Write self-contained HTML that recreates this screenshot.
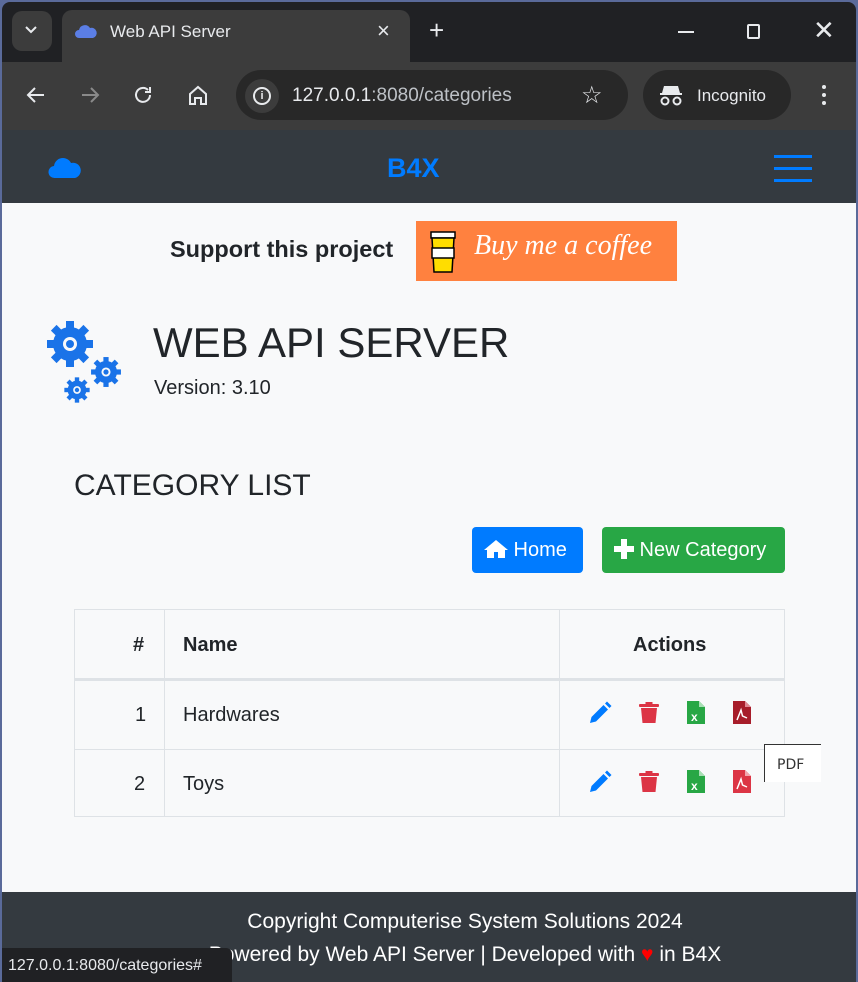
<!DOCTYPE html>
<html><head><meta charset="utf-8"><style>
*{box-sizing:border-box;margin:0;padding:0}
body{width:858px;height:982px;overflow:hidden;background:#5a6a9a;font-family:"Liberation Sans",sans-serif;position:relative}
.abs{position:absolute}
.win{left:2px;top:2px;width:854px;height:980px;background:#202124;border-radius:8px 8px 0 0;overflow:hidden}
.t{color:#e8eaed;font-size:17px}
</style></head><body>
<div class="abs win">
 <div class="abs" style="left:10px;top:9px;width:40px;height:40px;background:#3c3c3c;border-radius:10px"></div>
 <svg class="abs" style="left:22px;top:22px" width="14" height="12"><path d="M2 3l5 5 5-5" stroke="#e8eaed" stroke-width="2" fill="none"/></svg>
 <div class="abs" style="left:60px;top:8px;width:348px;height:60px;background:#3c3c3c;border-radius:10px 10px 0 0"></div>
 <svg class="abs" style="left:72px;top:20px" width="24" height="18"><path d="M5 16a4 4 0 0 1 0-8a6 6 0 0 1 11-2a5 5 0 0 1 3 10z" fill="#5b7ee5"/></svg>
 <div class="abs t" style="left:108px;top:20px">Web API Server</div>
 <div class="abs t" style="left:375px;top:16px;font-size:22px">×</div>
 <div class="abs t" style="left:427px;top:13px;font-size:26px">+</div>
 <div class="abs" style="left:676px;top:29px;width:16px;height:2px;background:#e8eaed"></div>
 <div class="abs" style="left:745px;top:22px;width:13px;height:15px;border:2px solid #e8eaed;border-radius:2px"></div>
 <div class="abs t" style="left:811px;top:13px;font-size:26px">✕</div>
 <div class="abs" style="left:0;top:60px;width:854px;height:68px;background:#3c3c3c"></div>
 <svg class="abs" style="left:22px;top:82px" width="24" height="22" stroke="#e8eaed" stroke-width="2" fill="none"><path d="M20 11H4M11 4l-7 7 7 7"/></svg>
 <svg class="abs" style="left:76px;top:82px" width="24" height="22" stroke="#8a8a8a" stroke-width="2" fill="none"><path d="M4 11h16M13 4l7 7-7 7"/></svg>
 <svg class="abs" style="left:130px;top:82px" width="24" height="22" stroke="#e8eaed" stroke-width="2" fill="none"><path d="M18 11a7 7 0 1 1-2-5M18 3v5h-5"/></svg>
 <svg class="abs" style="left:184px;top:82px" width="24" height="24" stroke="#e8eaed" stroke-width="2" fill="none"><path d="M4 10l8-7 8 7v10h-5v-6h-6v6H4z"/></svg>
 <div class="abs" style="left:234px;top:68px;width:392px;height:50px;background:#282828;border-radius:25px"></div>
 <div class="abs" style="left:243px;top:77px;width:34px;height:34px;background:#3c3c3c;border-radius:50%"></div>
 <div class="abs" style="left:251px;top:85px;width:18px;height:18px;border:2px solid #e8eaed;border-radius:50%;color:#e8eaed;font-size:11px;font-weight:bold;text-align:center;line-height:14px">i</div>
 <div class="abs t" style="left:290px;top:83px;font-size:19px">127.0.0.1<span style="color:#bdc1c6">:8080/categories</span></div>
 <div class="abs t" style="left:579px;top:79px;font-size:24px">☆</div>
 <div class="abs" style="left:641px;top:68px;width:148px;height:50px;background:#282828;border-radius:25px"></div>
 <svg class="abs" style="left:657px;top:82px" width="24" height="22" fill="#e8eaed"><path d="M5 2h14l2 7H3z"/><rect x="1" y="9" width="22" height="2"/><circle cx="6" cy="17" r="3.5" stroke="#e8eaed" stroke-width="2" fill="none"/><circle cx="18" cy="17" r="3.5" stroke="#e8eaed" stroke-width="2" fill="none"/></svg>
 <div class="abs t" style="left:695px;top:84px">Incognito</div>
 <div class="abs" style="left:820px;top:83px;width:4px;height:4px;background:#e8eaed;border-radius:50%;box-shadow:0 8px #e8eaed,0 16px #e8eaed"></div>
 <div class="abs" style="left:0;top:128px;width:854px;height:73px;background:#343a40"></div>
 <svg class="abs" style="left:46px;top:152px" width="34" height="26"><path d="M7 24a6 6 0 0 1-1-12a9 9 0 0 1 17-3a7 7 0 0 1 4 15z" fill="#007bff"/></svg>
 <div class="abs" style="left:385px;top:151px;color:#007bff;font-size:27px;font-weight:bold">B4X</div>
 <div class="abs" style="left:772px;top:153px;width:38px;height:3px;background:#007bff;box-shadow:0 12px #007bff,0 24px #007bff"></div>
 <div class="abs" style="left:0;top:201px;width:854px;height:689px;background:#f8f9fa"></div>
 <div class="abs" style="left:168px;top:234px;font-size:23.5px;font-weight:bold;color:#212529">Support this project</div>
 <div class="abs" style="left:414px;top:219px;width:261px;height:60px;background:#ff813f"></div>
 <svg class="abs" style="left:426px;top:228px" width="30" height="44"><rect x="3" y="2" width="24" height="6" fill="#fff" stroke="#000" stroke-width="1.5"/><path d="M4 8h22l-2 34H6z" fill="#ffdd00" stroke="#000" stroke-width="1.5"/><rect x="4" y="18" width="22" height="10" fill="#fff" stroke="#000" stroke-width="1.5"/></svg>
 <div class="abs" style="left:472px;top:228px;color:#fff;font-size:28px;font-family:'Liberation Serif',serif;font-style:italic">Buy me a coffee</div>
 <svg class="abs" style="left:44px;top:318px" width="80" height="86" fill="#1a73e8">
  <g transform="translate(24,24)"><circle r="17"/><g id="tt"><rect x="-4" y="-23" width="8" height="8"/></g><use href="#tt" transform="rotate(45)"/><use href="#tt" transform="rotate(90)"/><use href="#tt" transform="rotate(135)"/><use href="#tt" transform="rotate(180)"/><use href="#tt" transform="rotate(225)"/><use href="#tt" transform="rotate(270)"/><use href="#tt" transform="rotate(315)"/><circle r="7" fill="#f8f9fa"/><circle r="4"/></g>
  <g transform="translate(60,52) scale(.65)"><circle r="17"/><use href="#tt"/><use href="#tt" transform="rotate(45)"/><use href="#tt" transform="rotate(90)"/><use href="#tt" transform="rotate(135)"/><use href="#tt" transform="rotate(180)"/><use href="#tt" transform="rotate(225)"/><use href="#tt" transform="rotate(270)"/><use href="#tt" transform="rotate(315)"/><circle r="7" fill="#f8f9fa"/><circle r="4"/></g>
  <g transform="translate(31,70) scale(.55)"><circle r="17"/><use href="#tt"/><use href="#tt" transform="rotate(45)"/><use href="#tt" transform="rotate(90)"/><use href="#tt" transform="rotate(135)"/><use href="#tt" transform="rotate(180)"/><use href="#tt" transform="rotate(225)"/><use href="#tt" transform="rotate(270)"/><use href="#tt" transform="rotate(315)"/><circle r="7" fill="#f8f9fa"/><circle r="4"/></g>
 </svg>
 <div class="abs" style="left:151px;top:317px;font-size:42px;color:#212529">WEB API SERVER</div>
 <div class="abs" style="left:152px;top:375px;font-size:20px;color:#212529">Version: 3.10</div>
 <div class="abs" style="left:72px;top:467px;font-size:30px;color:#212529">CATEGORY LIST</div>
 <div class="abs" style="left:470px;top:525px;width:111px;height:46px;background:#007bff;border-radius:4px;color:#fff;font-size:20px;line-height:46px;padding-left:12px">
  <svg width="24" height="20" style="vertical-align:-3px" fill="#fff"><path d="M12 1L0 11h3v8h7v-6h4v6h7v-8h3z"/></svg> Home</div>
 <div class="abs" style="left:600px;top:525px;width:183px;height:46px;background:#28a745;border-radius:4px;color:#fff;font-size:20px;line-height:46px;padding-left:12px">
  <svg width="20" height="20" style="vertical-align:-3px" fill="#fff"><path d="M7 0h6v7h7v6h-7v7H7v-7H0V7h7z"/></svg> New Category</div>
 <div class="abs" style="left:72px;top:607px;width:711px;height:208px;border:1px solid #dee2e6;color:#212529;font-size:20px">
  <div class="abs" style="left:89px;top:0;width:1px;height:207px;background:#dee2e6"></div>
  <div class="abs" style="left:484px;top:0;width:1px;height:207px;background:#dee2e6"></div>
  <div class="abs" style="left:0;top:68px;width:710px;height:3px;background:#dee2e6"></div>
  <div class="abs" style="left:0;top:139px;width:710px;height:1px;background:#dee2e6"></div>
  <div class="abs" style="left:58px;top:24px;font-weight:bold">#</div>
  <div class="abs" style="left:108px;top:24px;font-weight:bold">Name</div>
  <div class="abs" style="left:558px;top:24px;font-weight:bold">Actions</div>
  <div class="abs" style="left:60px;top:94px">1</div>
  <div class="abs" style="left:108px;top:94px">Hardwares</div>
  <div class="abs" style="left:59px;top:163px">2</div>
  <div class="abs" style="left:108px;top:163px">Toys</div>
 </div>
 <svg width="0" height="0" class="abs"><defs>
  <g id="pen"><path d="M2 22l1.5-6 12-12 4.5 4.5-12 12z" fill="#007bff"/><path d="M17 2.5l2-2 4.5 4.5-2 2z" fill="#007bff"/></g>
  <g id="bin"><rect x="1" y="3" width="20" height="3" rx="1" fill="#dc3545"/><rect x="7.5" y="1" width="7" height="3" fill="#dc3545"/><path d="M3 7h16l-1.5 15h-13z" fill="#dc3545"/></g>
  <g id="xl"><path d="M2 0h12l6 6v17H2z" fill="#28a745"/><path d="M14 0v6h6z" fill="#a7e0b4"/><text x="6" y="20" font-size="12" fill="#fff" font-weight="bold" font-family="Liberation Sans">x</text></g>
 </defs></svg>
 <svg class="abs" style="left:586px;top:699px" width="180" height="26">
  <use href="#pen"/><g transform="translate(50,0)"><use href="#bin"/></g><g transform="translate(97,0)"><use href="#xl"/></g>
  <g transform="translate(143,0)"><path d="M2 0h12l6 6v17H2z" fill="#a71d2a"/><path d="M14 0v6h6z" fill="#e08a94"/><path d="M6 19l4-10 1.5 6 4.5 2" stroke="#fff" stroke-width="1.5" fill="none"/></g>
 </svg>
 <svg class="abs" style="left:586px;top:768px" width="180" height="26">
  <use href="#pen"/><g transform="translate(50,0)"><use href="#bin"/></g><g transform="translate(97,0)"><use href="#xl"/></g>
  <g transform="translate(143,0)"><path d="M2 0h12l6 6v17H2z" fill="#dc3545"/><path d="M14 0v6h6z" fill="#f1a6ae"/><path d="M6 19l4-10 1.5 6 4.5 2" stroke="#fff" stroke-width="1.5" fill="none"/></g>
 </svg>
 <div class="abs" style="left:762px;top:742px;width:57px;height:38px;background:#fff;border:1px solid #333;border-right:none;border-bottom:none;color:#333;line-height:40px;padding-left:12px;font-family:'DejaVu Sans',sans-serif;font-size:14px">PDF</div>
 <div class="abs" style="left:0;top:890px;width:854px;height:92px;background:#343a40;color:#fff;font-size:21px;text-align:center;padding-left:72px">
  <div style="margin-top:18px;line-height:24px">Copyright Computerise System Solutions 2024</div>
  <div style="margin-top:9px;line-height:24px">Powered by Web API Server | Developed with <span style="color:#f00">♥</span> in B4X</div>
 </div>
 <div class="abs" style="left:-2px;top:946px;width:232px;height:36px;background:#202124;border-radius:0 6px 0 0;color:#e8eaed;font-size:16px;line-height:36px;padding-left:8px">127.0.0.1:8080/categories#</div>
</div>
</body></html>
